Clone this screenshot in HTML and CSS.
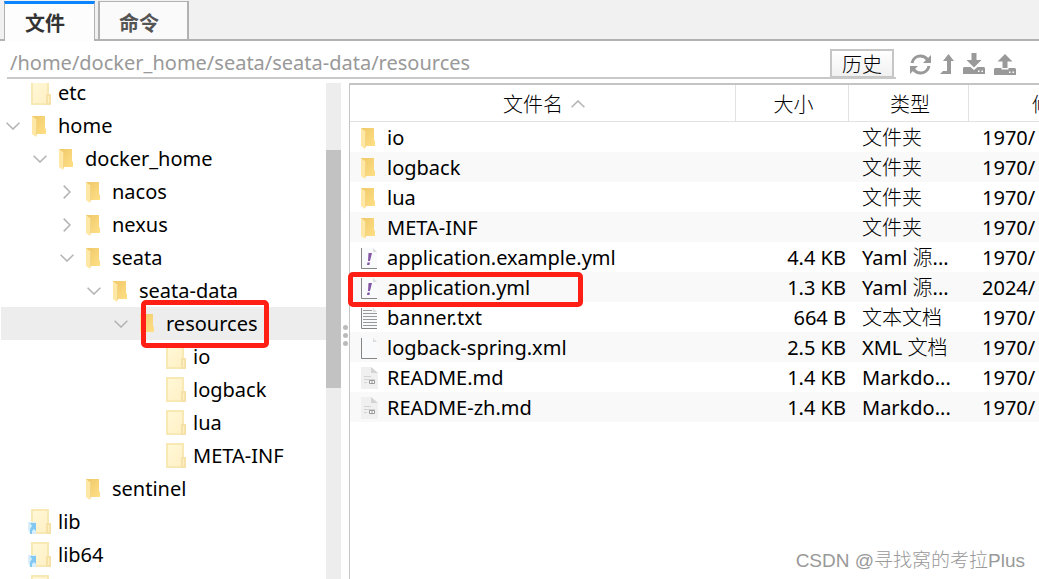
FILE: index.html
```html
<!DOCTYPE html>
<html lang="zh-CN">
<head>
<meta charset="utf-8">
<title>文件</title>
<link rel="stylesheet" href="styles.css">
</head>
<body>
<svg class="sprite" aria-hidden="true">
  <defs>
    <linearGradient id="gold" x1="0" y1="0" x2="1" y2="1"><stop offset="0" stop-color="#eec868"/><stop offset="1" stop-color="#ffdf86"/></linearGradient>
    <linearGradient id="pale" x1="0" y1="0" x2="1" y2="1"><stop offset="0" stop-color="#fff8d8"/><stop offset="1" stop-color="#fff0c4"/></linearGradient>
  </defs>
  <symbol id="folder" viewBox="0 0 14 21"><path fill="url(#gold)" d="M0 0h13v12l1 1v5H3z"/><path fill="#ffe8a6" d="M0 0l5 4v14l-1 3-4-3z"/><path fill="#f3d586" d="M4 3l1 1v14l-1 2z"/></symbol>
  <symbol id="folder-pale" viewBox="0 0 20 25"><path fill="url(#pale)" stroke="#f8e8b4" stroke-width="2" d="M1 1h16v23H1z"/><path fill="#fff0c4" stroke="#f6e2a8" stroke-width="2" d="M16 15h3v9h-3z"/></symbol>
  <symbol id="folder-link" viewBox="0 0 23 25"><path fill="url(#pale)" stroke="#f8e8b4" stroke-width="2" d="M4 1h16v23H4z"/><path fill="#fff0c4" stroke="#f6e2a8" stroke-width="2" d="M19 15h3v9h-3z"/><path fill="#d8effb" d="M0 13h8v12H2l-2-4z"/><path fill="#83c8f3" d="M2 14h6v8l-2-2-2 2v3H2v-5l2-3z"/></symbol>
  <symbol id="down" viewBox="0 0 14 8"><path fill="none" stroke="#b4b4b4" stroke-width="1.6" d="M.6.7L7 7 13.400 .7"/></symbol>
  <symbol id="right" viewBox="0 0 8 14"><path fill="none" stroke="#b4b4b4" stroke-width="1.6" d="M.7.6L7 7 .7 13.400"/></symbol>
  <symbol id="up" viewBox="0 0 14 8"><path fill="none" stroke="#b4b4b4" stroke-width="1.6" d="M.6 7.300L7 1l6.400 6.300"/></symbol>
  <symbol id="page" viewBox="0 0 17 21"><path fill="#f8fafb" d="M1 0h11l4 4v16H1z"/><path fill="#dcdcdc" d="M12 0l4 4h-4z"/><path fill="none" stroke="#858585" d="M.5 0v20.500H16"/></symbol>
  <symbol id="yml" viewBox="0 0 17 21"><use href="#page"/><path fill="#8456a5" d="M7.500 5h3.500l-2 8H7zM6.500 14.500H9L8.400 17H6z"/></symbol>
  <symbol id="txt" viewBox="0 0 17 21"><use href="#page"/><path stroke="#999" d="M2 2.500h9M2 5.500h14M2 8.500h14M2 11.500h14M2 14.500h14M2 17.500h14"/></symbol>
  <symbol id="md" viewBox="0 0 17 22"><path fill="#f0f0f0" d="M0 0h10l7 6v16H0z"/><path fill="#d4d4d4" d="M10 0l7 6h-7z"/><path stroke="#d3d3d3" d="M3 9.500h7M3 12.500h11M3 15.500h3"/><path fill="#fff" stroke="#999" d="M8.500 13.500h5v3h-5zM11 13.500v3"/></symbol>
</svg>

<nav class="tabs">
  <button class="tab tab-active" type="button">文件</button>
  <button class="tab" type="button">命令</button>
</nav>

<div class="toolbar">
  <div class="address">
    <input class="path" type="text" aria-label="路径" value="/home/docker_home/seata/seata-data/resources">
    <button class="history" type="button">历史</button>
  </div>
  <div class="tools">
    <button class="tool" type="button" aria-label="刷新"><svg width="21" height="21" viewBox="0 0 21 21"><g fill="none" stroke="#999" stroke-width="3"><path d="M2 9C3 4 7 2 10.500 2c3 0 5 1 7 3.500"/><path d="M19 12c-1 5-5 7-8.500 7-3 0-5-1-7-3.500"/></g><path fill="#999" d="M21 1v8h-8zM0 20v-8h8z"/></svg></button>
    <button class="tool" type="button" aria-label="上级"><svg width="14" height="20" viewBox="0 0 14 20"><path fill="#999" d="M8.500 0L14 7h-3v13H0l3-3h4V7H3z"/></svg></button>
    <button class="tool" type="button" aria-label="下载"><svg width="22" height="22" viewBox="0 0 22 22"><path fill="#999" d="M8.500 0h5v7h5L11 14.500 3.500 7h5zM1 14h6.500l3.500 3 3.500-3H21l1 1v6H0v-6z"/><path fill="#fff" d="M15 17.500h1.500V19H15zM18.500 17.500H20V19h-1.500z"/></svg></button>
    <button class="tool" type="button" aria-label="上传"><svg width="22" height="22" viewBox="0 0 22 22"><path fill="#999" d="M11 1l7.500 7.500h-5v6.500h-5V8.500h-5zM1 15h6.500v1.500h7V15H21l1 1v6H0v-6z"/><path fill="#fff" d="M15 18.500h1.500V20H15zM18.500 18.500H20V20h-1.500z"/></svg></button>
  </div>
</div>

<main class="panes">
  <aside class="tree-pane">
    <ul class="tree">
      <li class="node l0"><span class="twist"></span><span class="icon"><svg width="20" height="25"><use href="#folder-pale"/></svg></span>etc</li>
      <li class="node l0"><button class="twist" type="button" aria-label="折叠 home"><svg width="14" height="8"><use href="#down"/></svg></button><span class="icon open"><svg width="14" height="21"><use href="#folder"/></svg></span>home</li>
      <li class="node l1"><button class="twist" type="button" aria-label="折叠 docker_home"><svg width="14" height="8"><use href="#down"/></svg></button><span class="icon open"><svg width="14" height="21"><use href="#folder"/></svg></span>docker_home</li>
      <li class="node l2"><button class="twist" type="button" aria-label="展开 nacos"><svg width="8" height="14"><use href="#right"/></svg></button><span class="icon open"><svg width="14" height="21"><use href="#folder"/></svg></span>nacos</li>
      <li class="node l2"><button class="twist" type="button" aria-label="展开 nexus"><svg width="8" height="14"><use href="#right"/></svg></button><span class="icon open"><svg width="14" height="21"><use href="#folder"/></svg></span>nexus</li>
      <li class="node l2"><button class="twist" type="button" aria-label="折叠 seata"><svg width="14" height="8"><use href="#down"/></svg></button><span class="icon open"><svg width="14" height="21"><use href="#folder"/></svg></span>seata</li>
      <li class="node l3"><button class="twist" type="button" aria-label="折叠 seata-data"><svg width="14" height="8"><use href="#down"/></svg></button><span class="icon open"><svg width="14" height="21"><use href="#folder"/></svg></span>seata-data</li>
      <li class="node l4 selected"><button class="twist" type="button" aria-label="折叠 resources"><svg width="14" height="8"><use href="#down"/></svg></button><span class="icon open"><svg width="14" height="21"><use href="#folder"/></svg></span>resources<span class="mark mark-tree"></span></li>
      <li class="node l5"><span class="twist"></span><span class="icon"><svg width="20" height="25"><use href="#folder-pale"/></svg></span>io</li>
      <li class="node l5"><span class="twist"></span><span class="icon"><svg width="20" height="25"><use href="#folder-pale"/></svg></span>logback</li>
      <li class="node l5"><span class="twist"></span><span class="icon"><svg width="20" height="25"><use href="#folder-pale"/></svg></span>lua</li>
      <li class="node l5"><span class="twist"></span><span class="icon"><svg width="20" height="25"><use href="#folder-pale"/></svg></span>META-INF</li>
      <li class="node l2"><span class="twist"></span><span class="icon open"><svg width="14" height="21"><use href="#folder"/></svg></span>sentinel</li>
      <li class="node l0"><span class="twist"></span><span class="icon icon-link"><svg width="23" height="25"><use href="#folder-link"/></svg></span>lib</li>
      <li class="node l0"><span class="twist"></span><span class="icon icon-link"><svg width="23" height="25"><use href="#folder-link"/></svg></span>lib64</li>
      <li class="node l0"><span class="twist"></span><span class="icon"><svg width="20" height="25"><use href="#folder-pale"/></svg></span></li>
    </ul>
    <div class="track"><div class="thumb"></div></div>
  </aside>
  <div class="sash"><i></i><i></i><i></i></div>
  <section class="file-pane">
    <table class="files">
      <colgroup><col><col class="col-size"><col class="col-type"><col class="col-date"></colgroup>
      <thead>
        <tr><th>文件名<svg class="sort" width="14" height="8"><use href="#up"/></svg></th><th>大小</th><th>类型</th><th class="date-head">修</th></tr>
      </thead>
      <tbody>
        <tr><td><div class="name"><span class="icon"><svg width="14" height="21"><use href="#folder"/></svg></span>io</div></td><td></td><td class="cjk">文件夹</td><td>1970/</td></tr>
        <tr><td><div class="name"><span class="icon"><svg width="14" height="21"><use href="#folder"/></svg></span>logback</div></td><td></td><td class="cjk">文件夹</td><td>1970/</td></tr>
        <tr><td><div class="name"><span class="icon"><svg width="14" height="21"><use href="#folder"/></svg></span>lua</div></td><td></td><td class="cjk">文件夹</td><td>1970/</td></tr>
        <tr><td><div class="name"><span class="icon"><svg width="14" height="21"><use href="#folder"/></svg></span>META-INF</div></td><td></td><td class="cjk">文件夹</td><td>1970/</td></tr>
        <tr><td><div class="name"><span class="icon"><svg width="17" height="21"><use href="#yml"/></svg></span>application.example.yml</div></td><td>4.4 KB</td><td>Yaml <span class="cjk">源</span>...</td><td>1970/</td></tr>
        <tr><td><div class="name"><span class="icon"><svg width="17" height="21"><use href="#yml"/></svg></span>application.yml<span class="mark mark-file"></span></div></td><td>1.3 KB</td><td>Yaml <span class="cjk">源</span>...</td><td>2024/</td></tr>
        <tr><td><div class="name"><span class="icon"><svg width="17" height="21"><use href="#txt"/></svg></span>banner.txt</div></td><td>664 B</td><td class="cjk">文本文档</td><td>1970/</td></tr>
        <tr><td><div class="name"><span class="icon"><svg width="17" height="21"><use href="#page"/></svg></span>logback-spring.xml</div></td><td>2.5 KB</td><td>XML <span class="cjk">文档</span></td><td>1970/</td></tr>
        <tr><td><div class="name"><span class="icon"><svg width="17" height="22"><use href="#md"/></svg></span>README.md</div></td><td>1.4 KB</td><td>Markdo...</td><td>1970/</td></tr>
        <tr><td><div class="name"><span class="icon"><svg width="17" height="22"><use href="#md"/></svg></span>README-zh.md</div></td><td>1.4 KB</td><td>Markdo...</td><td>1970/</td></tr>
      </tbody>
    </table>
  </section>
</main>
<div class="watermark">CSDN @寻找窝的考拉Plus</div>
</body>
</html>
```

FILE: styles.css
```css
* { box-sizing: border-box; }
html, body { height: 100%; }
body {
  margin: 0;
  display: flex;
  flex-direction: column;
  overflow: hidden;
  background: #fff;
  color: #000;
  font: 20px/30px "Noto Sans", "Noto Sans CJK SC", sans-serif;
}
button, input { font: inherit; color: inherit; border: 0; margin: 0; padding: 0; background: none; }
svg { display: block; flex: none; }
.sprite { position: absolute; width: 0; height: 0; }

.tabs {
  display: flex;
  gap: 3px;
  height: 41px;
  padding: 1px 4px 0;
  background: linear-gradient(#b2b2b2, #b2b2b2) bottom / 100% 2px no-repeat #f1f1f1;
}
.tab {
  width: 91px;
  padding: 6px 9px 0 0;
  border: solid #b2b2b2;
  border-width: 1px 2px 2px;
  background: #fafafa;
  color: #555;
  font-weight: 700;
  text-align: center;
}
.tab-active {
  border-width: 3px 1px 0;
  border-top-color: #0a84ff;
  background: #fdfdfd;
  color: #333;
  padding-top: 3px;
}

.toolbar { display: flex; height: 42px; padding: 8px 23px 4px 7px; }
.address { flex: 1; display: flex; padding-right: 2px; border-bottom: 2px solid #c9c9c9; }
.path { flex: 1; min-width: 0; padding-left: 3px; color: #999; outline: 0; }
.history {
  width: 64px;
  padding-top: 2px;
  line-height: 24px;
  border: 2px solid #c6c6c6;
  border-bottom-width: 1px;
  background: linear-gradient(#fff, #f1f1f1);
  font-weight: 300;
}
.tools { display: flex; align-items: center; gap: 9px; padding-left: 14px; }
.tool { display: block; }

.panes { flex: 1; display: flex; min-height: 0; }
.tree-pane { flex: 0 0 341px; display: flex; overflow: hidden; }
.tree { flex: 1; list-style: none; margin: -7px 0 0; padding: 0; }
.node { position: relative; display: flex; align-items: center; height: 33px; padding-left: 6px; white-space: nowrap; }
.selected { background: linear-gradient(#ededed, #ededed) right / calc(100% - 1px) 100% no-repeat; }
.l1 { padding-left: 33px; }
.l2 { padding-left: 60px; }
.l3 { padding-left: 87px; }
.l4 { padding-left: 114px; }
.l5 { padding-left: 141px; }
.twist { width: 13px; display: flex; justify-content: center; margin-right: 12px; }
.icon { flex: none; width: 27px; }
.open { padding: 2px 0 0 1px; }
.icon-link { width: 30px; margin-left: -3px; }
.track { width: 15px; padding-top: 67px; background: #ededed; }
.thumb { height: 238px; background: #c2c2c2; }
.sash { width: 8px; display: flex; flex-direction: column; justify-content: center; align-items: center; gap: 3px; padding-top: 8px; }
.sash i { width: 5px; height: 5px; border-radius: 50%; background: #bbb; }

.file-pane { flex: 1; min-width: 0; border: solid #c4c4c4; border-width: 2px 0 0 1px; }
.files { width: 100%; table-layout: fixed; border-collapse: separate; border-spacing: 0; }
.col-size { width: 113px; }
.col-type { width: 120px; }
.col-date { width: 70px; }
th { height: 37px; padding: 3px 0 0 3px; border-bottom: 1px solid #e2e2e2; border-right: 1px solid #e2e2e2; font-weight: 300; }
.date-head { border-right: 0; text-align: left; padding-left: 63px; white-space: nowrap; }
.sort { display: inline-block; margin-left: 8px; vertical-align: 4px; }
td { height: 30px; padding: 2px 0 0; line-height: 28px; white-space: nowrap; }
tbody tr:nth-child(even) { background: #f9f9f9; }
td:nth-child(2) { text-align: right; padding-right: 3px; }
td:nth-child(n+3) { padding-left: 13px; }
.cjk { font-weight: 300; }
.name { position: relative; display: flex; align-items: center; height: 28px; padding-left: 11px; }
.name .icon { width: 26px; }

.mark { position: absolute; z-index: 1; border: 5px solid #ff1f14; border-radius: 5px; }
.mark-tree { left: 141px; top: -7px; width: 128px; height: 48px; }
.mark-file { left: -2px; top: -2px; width: 235px; height: 35px; }

.watermark {
  position: absolute;
  right: 14px;
  bottom: 4px;
  color: #999;
  font: 300 19px/28px "Liberation Sans", "Noto Sans CJK SC", sans-serif;
}
```
